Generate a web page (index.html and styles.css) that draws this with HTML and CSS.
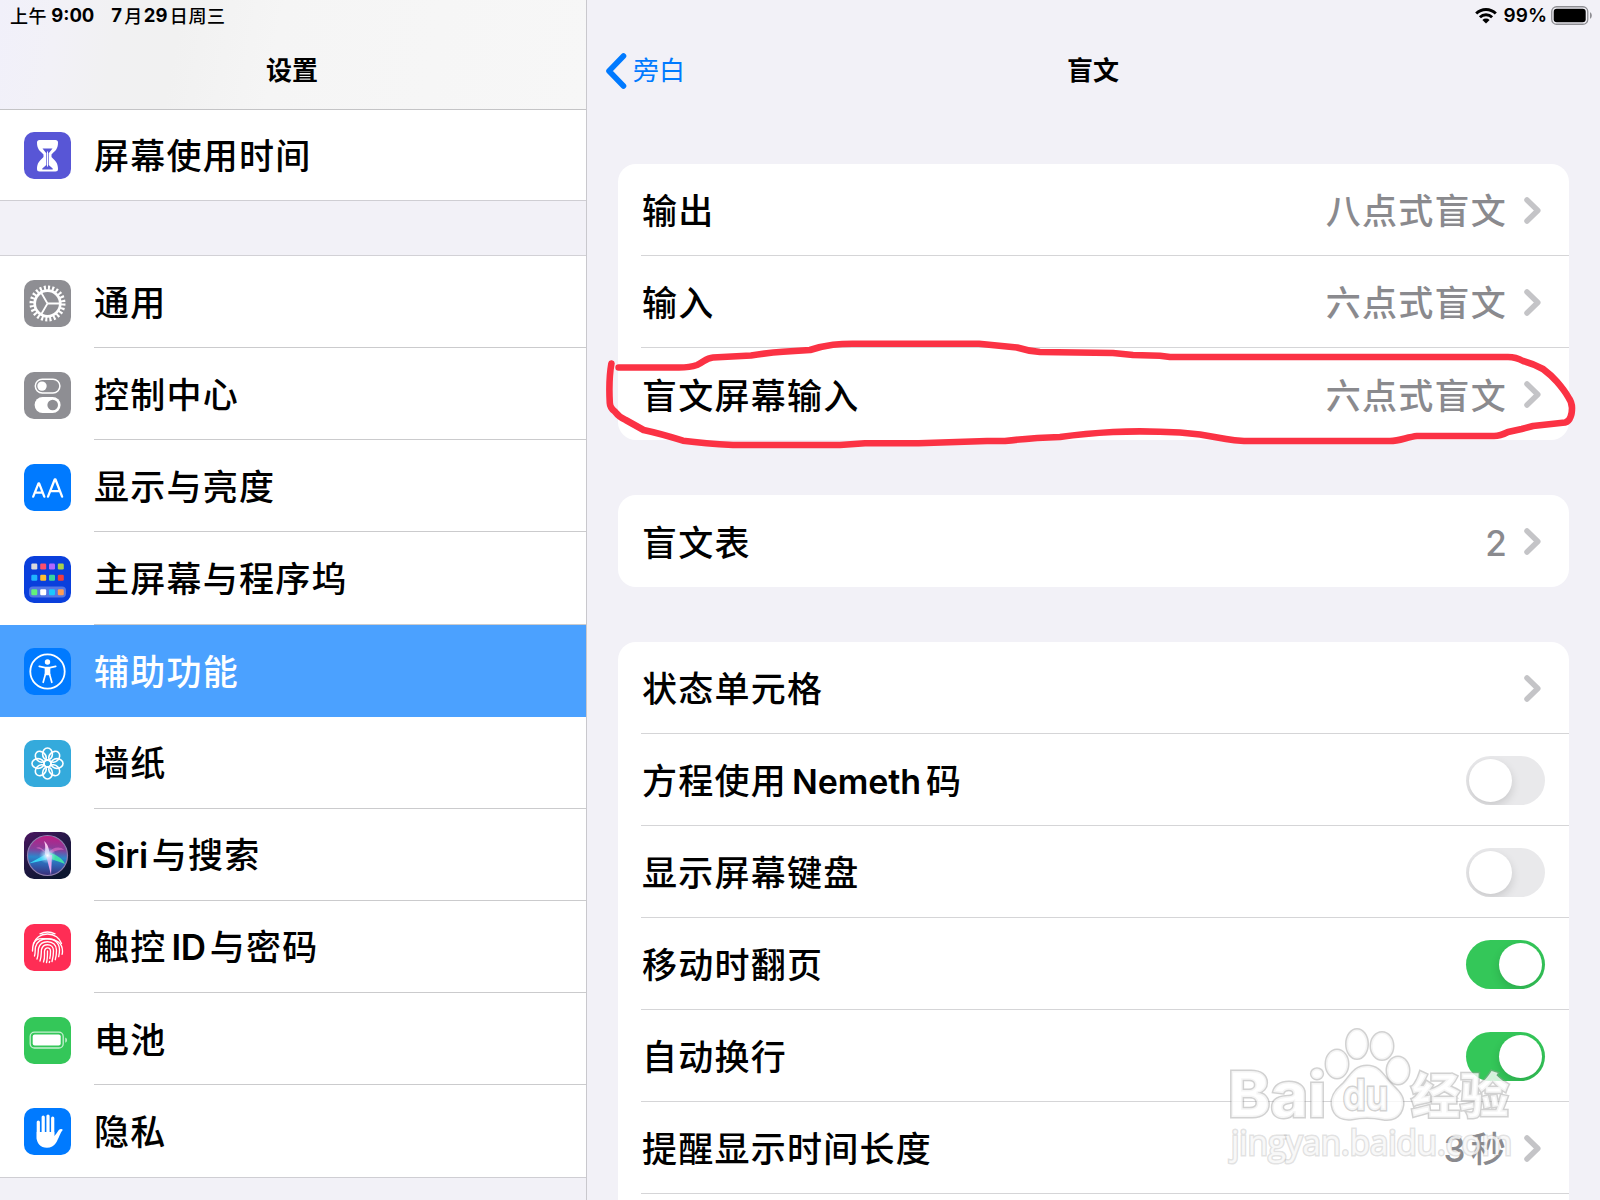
FILE: index.html
```html
<!DOCTYPE html>
<html lang="zh-CN">
<head>
<meta charset="utf-8">
<title>设置</title>
<link rel="stylesheet" href="styles.css">
</head>
<body>
<div class="app">
  <aside class="sidebar">
    <header class="side-header">
      <div class="status status-left"><span class="cjk">上午</span><span class="time">9:00</span><span class="day">7</span><span class="cjk">月</span><span class="num">29</span><span class="cjk">日周三</span></div>
      <h1 class="title">设置</h1>
    </header>
    <ul class="menu menu-top">
      <li class="item">
        <svg class="icon" viewBox="0 0 47 47"><rect width="47" height="47" rx="10" fill="#5856d6"/><path d="M15.500 8h16q2.500 0 2.500 2.500c0 6.500-2.500 8-6.500 12v2.500c4 4 6.500 6 6.500 12q0 2.500-2.500 2.500h-16q-2.500 0-2.500-2.500c0-6 2.500-8 6.500-12v-2.500c-4-4-6.500-5.500-6.500-12Q13 8 15.500 8z" fill="#fff"/><path d="M18.500 16.500h10l-4 5h-2zM22.300 21.500h2.400V33l4 3.500v1H18.300v-1l4-3.500z" fill="#5856d6"/><path d="M23.500 19.500V34.500" stroke="#fff" stroke-width="1"/></svg>
        <span class="label">屏幕使用时间</span>
      </li>
    </ul>
    <ul class="menu">
      <li class="item">
        <svg class="icon" viewBox="0 0 47 47"><rect width="47" height="47" rx="10" fill="#8e8e93"/><g fill="none" stroke="#fff"><circle cx="23.500" cy="23.500" r="15.600" stroke-width="4.800" stroke-dasharray="2.042 2.042"/><circle cx="23.500" cy="23.500" r="12.800" stroke-width="2.700"/><path d="M23.500 23.500H36M23.500 23.500l-6.400-11M23.500 23.500l-6.400 11" stroke-width="1.800"/></g></svg>
        <span class="label">通用</span>
      </li>
      <li class="item">
        <svg class="icon" viewBox="0 0 47 47"><rect width="47" height="47" rx="10" fill="#8e8e93"/><rect x="11.300" y="7.200" width="24.600" height="13.800" rx="6.900" fill="none" stroke="#fff" stroke-width="1.500"/><circle cx="18" cy="14.100" r="4.700" fill="#fff"/><rect x="10.600" y="25" width="26" height="16" rx="8" fill="#fff"/><circle cx="28.700" cy="33" r="5.300" fill="#8e8e93"/></svg>
        <span class="label">控制中心</span>
      </li>
      <li class="item">
        <svg class="icon" viewBox="0 0 47 47"><rect width="47" height="47" rx="10" fill="#007aff"/><path d="M9.200 32.600l5.300-13.200h.6L20.300 32.600M11 28.600h7.300M24 32.600l6.700-17.100h.8L38.100 32.600M26.400 27.200h9.200" fill="none" stroke="#fff" stroke-width="2.300" stroke-linecap="round" stroke-linejoin="round"/></svg>
        <span class="label">显示与亮度</span>
      </li>
      <li class="item">
        <svg class="icon" viewBox="0 0 47 47"><rect width="47" height="47" rx="10" fill="#0a3fdc"/><rect x="5" y="30.600" width="37" height="11" rx="4" fill="#5377e4"/><g><rect x="7.300" y="7.500" width="6" height="6" rx="1.200" fill="#d8d8dc"/><rect x="16.200" y="7.500" width="6" height="6" rx="1.200" fill="#fc4f6d"/><rect x="25" y="7.500" width="6" height="6" rx="1.200" fill="#b067ff"/><rect x="33.800" y="7.500" width="6" height="6" rx="1.200" fill="#a9d04b"/><rect x="7.300" y="18.800" width="6" height="6" rx="1.200" fill="#1fb4ff"/><rect x="16.200" y="18.800" width="6" height="6" rx="1.200" fill="#fdc02f"/><rect x="25" y="18.800" width="6" height="6" rx="1.200" fill="#36d5a0"/><rect x="33.800" y="18.800" width="6" height="6" rx="1.200" fill="#f23c3c"/><rect x="7.300" y="33.200" width="6" height="6" rx="1.200" fill="#62f27c"/><rect x="16.200" y="33.200" width="6" height="6" rx="1.200" fill="#fff"/><rect x="25" y="33.200" width="6" height="6" rx="1.200" fill="#19c8ff"/><rect x="33.800" y="33.200" width="6" height="6" rx="1.200" fill="#ff9c52"/></g></svg>
        <span class="label">主屏幕与程序坞</span>
      </li>
      <li class="item selected">
        <svg class="icon" viewBox="0 0 47 47"><rect width="47" height="47" rx="10" fill="#007aff"/><circle cx="23.500" cy="23.500" r="17.200" fill="none" stroke="#fff" stroke-width="1.800"/><circle cx="23.500" cy="14" r="2.700" fill="#fff"/><path d="M15.300 18.300l5.700 1.300h5l5.700-1.300" fill="none" stroke="#fff" stroke-width="1.800" stroke-linecap="round"/><path d="M20.700 19.200h5.600v7l-.5 1h-4.600l-.5-1z" fill="#fff"/><path d="M21.500 26l-2.300 8.300M25.500 26l2.300 8.300" stroke="#fff" stroke-width="1.700" stroke-linecap="round"/></svg>
        <span class="label">辅助功能</span>
      </li>
      <li class="item">
        <svg class="icon" viewBox="0 0 47 47"><rect width="47" height="47" rx="10" fill="#34aadc"/><g fill="none" stroke="#fff" stroke-width="1.600"><g id="petals"><ellipse cx="23.500" cy="14" rx="4.900" ry="6"/><ellipse cx="23.500" cy="33" rx="4.900" ry="6"/><ellipse cx="14" cy="23.500" rx="6" ry="4.900"/><ellipse cx="33" cy="23.500" rx="6" ry="4.900"/></g><use href="#petals" transform="rotate(45 23.500 23.500)"/><circle cx="23.500" cy="23.500" r="3.400"/></g></svg>
        <span class="label">墙纸</span>
      </li>
      <li class="item">
        <svg class="icon" viewBox="0 0 47 47">
          <defs>
            <linearGradient id="siri-bg" x1="0" y1="0" x2=".6" y2="1"><stop offset="0" stop-color="#4b1560"/><stop offset=".5" stop-color="#241846"/><stop offset="1" stop-color="#0c1630"/></linearGradient>
            <linearGradient id="siri-orb" x1=".5" y1="0" x2=".45" y2="1"><stop offset="0" stop-color="#c01c84"/><stop offset=".35" stop-color="#84409c"/><stop offset=".55" stop-color="#2c88cc"/><stop offset=".75" stop-color="#2f5fb0"/><stop offset="1" stop-color="#3a2d78"/></linearGradient>
            <radialGradient id="siri-glow"><stop offset="0" stop-color="#fff"/><stop offset=".3" stop-color="#cfe9ff" stop-opacity=".8"/><stop offset="1" stop-color="#8ad8ff" stop-opacity="0"/></radialGradient>
          </defs>
          <rect width="47" height="47" rx="10" fill="url(#siri-bg)"/><circle cx="23.500" cy="23.500" r="20" fill="url(#siri-orb)" stroke="#8e7fae" stroke-width="1.200"/>
          <path d="M23 22C17 14 14 15 12 16c6 1 8 4 11 6zM24 21c5-6 12-7 16-3-6-1-10 1-16 6z" fill="#e26cc4" opacity=".65"/><path d="M24 21L5 31.500l18-4z" fill="#39d5f5"/><path d="M24 20c6 2 14 5 17 12-7-3-13-4-18-7z" fill="#3fe0a8"/><path d="M22 23l5 20 1-20z" fill="#e8a5ee"/><path d="M20 9c2 5 1 9 1 14l5 2c-1-7-1-12-6-16z" fill="#f6c4ee"/>
          <circle cx="23.500" cy="23.500" r="8.500" fill="url(#siri-glow)"/>
        </svg>
        <span class="label"><span class="latin">Siri</span>与搜索</span>
      </li>
      <li class="item">
        <svg class="icon" viewBox="0 0 47 47"><rect width="47" height="47" rx="10" fill="#ff2d55"/><g fill="none" stroke="#fff" stroke-width="1.350" stroke-linecap="round"><path d="M16 9.800c4.500-2.200 10.500-2.200 15 0"/><path d="M9.500 19.500c1-3 2.500-5 5-6.800 5-3.600 13-3.600 18 0 2.500 1.800 4 4 5 6.800"/><path d="M8.500 27c0-15 9-12.200 15-12.200 9 0 15 4.500 15 12.500 0 1 0 2-.4 3"/><path d="M10.500 32c1-3 .5-6 1-9 1.500-5.500 6-8.300 12-8.300 7 0 12 4.500 12 11 0 3-.3 5-.8 7"/><path d="M13 35c1.500-4 1-7.500 1.500-10.500 1-4.300 4.500-6.800 9-6.800 5.500 0 9 3.500 9 8.500 0 4-.4 6.500-1.200 9.500"/><path d="M16 37c1.800-4.500 1-8.500 1.500-11.500.7-3 3-4.800 6-4.800 3.700 0 6 2.500 6 6 0 4-.5 7-1.500 10.800"/><path d="M19.500 38c1.700-4 .8-8 1-11 .3-2 1.400-3.200 3-3.200 2 0 3 1.200 3 3.400 0 3.500-.2 5.300-.7 7.300"/><path d="M23.500 27c0 4.500 0 8-1 11.500M25.600 37.500l-.3 1"/></g></svg>
        <span class="label">触控<span class="latin latin-mid">ID</span>与密码</span>
      </li>
      <li class="item">
        <svg class="icon" viewBox="0 0 47 47"><rect width="47" height="47" rx="10" fill="#34c759"/><rect x="6.200" y="15.200" width="33" height="15.800" rx="4.300" fill="none" stroke="#c5f0d0" stroke-width="1.300"/><rect x="8.700" y="17.600" width="28" height="11" rx="2" fill="#fff"/><path d="M41.200 20.500c2.500.8 2.500 4.400 0 5.200z" fill="#b9edc6"/></svg>
        <span class="label">电池</span>
      </li>
      <li class="item">
        <svg class="icon" viewBox="0 0 47 47"><rect width="47" height="47" rx="10" fill="#007aff"/><path d="M14.300 14v17M19.200 9v17M24 8v17M28.700 10v17" stroke="#fff" stroke-width="3.200" stroke-linecap="round"/><path d="M12.700 24h17.600v4c1.500-1 3.200-4.500 4.500-6 1.200-1.300 3.500-1.300 4-.1-2.300 2.100-4.200 9.100-6.900 13-2 3-5 4.800-9 4.800-6.500 0-10.200-4.200-10.200-10.200z" fill="#fff"/></svg>
        <span class="label">隐私</span>
      </li>
    </ul>
  </aside>

  <main class="detail">
    <div class="status status-right">
      <svg class="wifi" viewBox="0 0 22 16"><g fill="none" stroke="#000" stroke-width="2.900"><path d="M1.200 5.600a13.800 13.800 0 0 1 19.600 0"/><path d="M4.900 9.300a8.700 8.700 0 0 1 12.200 0"/></g><path d="M11 15.500l-3.600-3.600a5.100 5.100 0 0 1 7.200 0z"/></svg>
      <span class="percent">99%</span>
      <svg class="battery" viewBox="0 0 42 19"><rect x=".75" y=".75" width="36" height="17.500" rx="4.800" fill="none" stroke="#8e8e93" stroke-width="1.300"/><rect x="2.700" y="2.700" width="32" height="13.600" rx="3" fill="#000"/><path d="M39 6.300c2.400.9 2.400 5.500 0 6.400z" fill="#8e8e93"/></svg>
    </div>
    <header class="nav">
      <a class="back"><svg class="back-arrow" viewBox="0 0 22 36"><path d="M18.500 3L4 18l14.500 15" fill="none" stroke="#007aff" stroke-width="5.600" stroke-linecap="round" stroke-linejoin="round"/></svg><span>旁白</span></a>
      <h1 class="title">盲文</h1>
    </header>

    <section class="card">
      <div class="row"><span class="label">输出</span><span class="value">八点式盲文</span><svg class="chevron" viewBox="0 0 17 27"><path d="M3 3l10.800 10.500L3 24"/></svg></div>
      <div class="row"><span class="label">输入</span><span class="value">六点式盲文</span><svg class="chevron" viewBox="0 0 17 27"><path d="M3 3l10.800 10.500L3 24"/></svg></div>
      <div class="row"><span class="label">盲文屏幕输入</span><span class="value">六点式盲文</span><svg class="chevron" viewBox="0 0 17 27"><path d="M3 3l10.800 10.500L3 24"/></svg></div>
    </section>

    <section class="card">
      <div class="row"><span class="label">盲文表</span><span class="value value-num">2</span><svg class="chevron" viewBox="0 0 17 27"><path d="M3 3l10.800 10.500L3 24"/></svg></div>
    </section>

    <section class="card">
      <div class="row"><span class="label">状态单元格</span><svg class="chevron" viewBox="0 0 17 27"><path d="M3 3l10.800 10.500L3 24"/></svg></div>
      <div class="row"><span class="label">方程使用<span class="latin nemeth">Nemeth</span>码</span><span class="toggle"></span></div>
      <div class="row"><span class="label">显示屏幕键盘</span><span class="toggle"></span></div>
      <div class="row"><span class="label">移动时翻页</span><span class="toggle on"></span></div>
      <div class="row"><span class="label">自动换行</span><span class="toggle on"></span></div>
      <div class="row"><span class="label">提醒显示时间长度</span><span class="value"><span class="secs">3</span>秒</span><svg class="chevron" viewBox="0 0 17 27"><path d="M3 3l10.800 10.500L3 24"/></svg></div>
      <div class="row"></div>
    </section>
  </main>

  <svg class="overlay" viewBox="0 0 1600 1200">
    <path class="marker" d="M618.600 367.500H679Q690 367.500 697 365C704 362 706 358 713 357.500L751 355.500Q770 352.500 783 351.700L810 350Q822 346 833 344.700Q842 343.800 852.500 343.800H979L1017 347.500Q1028 351 1040 352L1113 353L1133 355L1160 355.700L1170 357H1508Q1516 357 1523 361Q1534 364 1543 369Q1551 375 1557 381.700Q1565 391 1568 396.700Q1572 402 1572 408Q1572 414 1570.500 417Q1569 421.500 1565 422.500L1533 426L1521.700 429L1508 432Q1500 436 1494 436H1417C1407 437 1400 441 1390 441H1244Q1234 440.500 1226 439L1200 434.500Q1180 432 1160 431.700Q1135 431 1113 432Q1085 433.500 1060 437Q1030 438 1005 441H987L918.600 443.300H865L840 445H733Q705 443.500 683 440.700Q662 434 643.600 430L625.700 420Q619 417 615 411.700Q610 408 609.800 403Q608.500 380 611.400 363.500"/>
    <g class="watermark">
      <text class="wm-logo" x="1228" y="1117" textLength="98" lengthAdjust="spacingAndGlyphs">Bai</text>
      <ellipse cx="1337" cy="1064" rx="11" ry="14"/>
      <ellipse cx="1357" cy="1044" rx="10.500" ry="14.500"/>
      <ellipse cx="1382" cy="1046" rx="11" ry="13.500"/>
      <ellipse cx="1398" cy="1070.500" rx="11" ry="13.500"/>
      <path d="M1367 1066c-14 0-17 12-25 19-7 6-11 12-10 20 2 13 12 15 20 14 10-2 20-2 30 0 9 2 19-1 21-14 1-9-5-14-11-20-9-9-12-19-25-19z"/>
      <text class="wm-du" x="1343" y="1110" textLength="45" lengthAdjust="spacingAndGlyphs">du</text>
      <text class="wm-cjk" x="1411" y="1113" textLength="98" lengthAdjust="spacingAndGlyphs">经验</text>
      <text class="wm-url" x="1231" y="1155" textLength="281" lengthAdjust="spacingAndGlyphs">jingyan.baidu.com</text>
    </g>
  </svg>
</div>
</body>
</html>
```

FILE: styles.css
```css
* {
  box-sizing: border-box;
}

body {
  margin: 0;
  background: #f2f1f7;
  color: #000;
  font-family: Inter, "Noto Sans CJK SC", sans-serif;
}

.app {
  position: relative;
  display: flex;
  width: 1600px;
  height: 1200px;
  overflow: hidden;
}

.sidebar {
  width: 587px;
  height: 1200px;
  flex: none;
  border-right: 1px solid #c9c8cd;
  overflow: hidden;
}

.side-header {
  height: 110px;
  border-bottom: 1px solid #c4c4c6;
  background: linear-gradient(100deg, #f1f0fa 0, #f2f1f7 60px, #f1f1f2 120px, #f1f1f1 180px, #f5f5f5 280px, #f7f7f7 100%);
}

.status {
  display: flex;
  align-items: center;
  height: 31px;
  font-size: 18.500px;
  font-weight: 600;
}

.status-left {
  height: 30px;
  padding-left: 10px;
  white-space: nowrap;
}

.status .cjk {
  font-size: 18px;
  font-weight: 500;
  letter-spacing: 0.600px;
}

.status-left > span:not(.cjk) {
  font-weight: 700;
}

.time {
  width: 43px;
  margin: 0 17px 0 4px;
}

.day {
  width: 13px;
}

.num {
  width: 26px;
  margin-left: 1px;
}

.title {
  margin: 0;
  font-size: 26px;
  font-weight: 600;
  line-height: 38px;
  text-align: center;
}

.side-header .title {
  margin: 22px 2px 0 0;
}

.menu {
  margin: 0 0 54px;
  padding: 0;
  list-style: none;
  background: #fff;
  border-top: 1px solid #d2d1d6;
  border-bottom: 1px solid #cfced3;
}

.menu-top {
  border-top: 0;
}

.item {
  display: flex;
  align-items: center;
  height: 92.130px;
  padding: 2px 0 0 23.500px;
  gap: 23.500px;
}

.item:last-child {
  height: 91.630px;
}

.menu-top .item:last-child {
  height: 90px;
  padding-top: 1px;
}

.icon {
  width: 47px;
  height: 47px;
  flex: none;
}

.label {
  flex: 1;
  font-size: 35px;
  font-weight: 500;
  line-height: 50px;
  letter-spacing: 1.250px;
  white-space: nowrap;
}

.item .label {
  display: flex;
  align-items: center;
  align-self: stretch;
  border-bottom: 1px solid #cbcbcd;
}

.menu-top .label,
.item:last-child .label,
.selected .label {
  border-bottom: 0;
}

.selected {
  background: #4ba1ff;
  color: #fff;
}

.latin {
  letter-spacing: -0.400px;
  margin-right: 4px;
}

.latin-mid {
  margin-left: 5px;
}

.detail {
  flex: 1;
  padding: 0 31px 0 31px;
}

.status-right {
  justify-content: flex-end;
  margin-right: -24px;
}

.wifi {
  width: 22px;
  height: 16px;
}

.percent {
  margin: 0 4px 0 7px;
  font-size: 19px;
}

.battery {
  width: 42px;
  height: 19px;
}

.nav {
  display: grid;
  grid-template-columns: 1fr auto 1fr;
  align-items: center;
  height: 80px;
  margin-bottom: 53.300px;
}

.nav .title {
  margin-right: 1px;
}

.back {
  display: flex;
  align-items: center;
  gap: 6px;
  margin-left: -13px;
  color: #007aff;
  font-size: 26px;
  line-height: 38px;
}

.back-arrow {
  width: 22px;
  height: 36px;
}

.card {
  margin-bottom: 54.800px;
  border-radius: 18px;
  background: #fff;
}

.row {
  display: flex;
  align-items: center;
  height: 92.050px;
  margin-left: 23px;
  padding: 1px 24px 0 1px;
  border-bottom: 1px solid #d5d5d7;
}

.row:last-child {
  border-bottom: 0;
}

.row .label,
.row .value {
  padding-top: 2px;
}

.value {
  color: #8a8a8e;
  font-size: 35px;
  font-weight: 500;
  line-height: 50px;
  letter-spacing: 1.250px;
}

.value-num {
  margin-right: -1px;
}

.secs {
  margin-right: 4px;
}

.chevron {
  width: 17px;
  height: 27px;
  margin: 0 4px 0 17px;
  fill: none;
  stroke: #c4c4c7;
  stroke-width: 5.500;
  stroke-linecap: round;
  stroke-linejoin: round;
}

.nemeth {
  letter-spacing: -0.100px;
  margin: 0 5px 0 5px;
  font-size: 34px;
  font-weight: 600;
}

.item .latin {
  font-weight: 600;
}

.toggle {
  display: flex;
  width: 79.500px;
  height: 49px;
  padding: 3px;
  border-radius: 25px;
  background: #e9e9eb;
  overflow: hidden;
}

.toggle::before {
  content: "";
  width: 43px;
  height: 43px;
  border-radius: 50%;
  background: #fff;
  box-shadow: 0 4px 10px rgba(0, 0, 0, 0.140);
}

.toggle.on {
  justify-content: flex-end;
  background: #34c759;
}

.overlay {
  position: absolute;
  inset: 0;
  width: 1600px;
  height: 1200px;
  pointer-events: none;
}

.marker {
  fill: none;
  stroke: #fb3244;
  stroke-width: 6.600;
  stroke-linecap: round;
  stroke-linejoin: round;
}

.watermark {
  fill: #fff;
  fill-opacity: 0.780;
  stroke: #999;
  stroke-opacity: 0.450;
  stroke-width: 3;
  paint-order: stroke;
}

.wm-logo {
  font: 800 63px Inter, sans-serif;
}

.wm-du {
  font: 700 42px Inter, sans-serif;
}

.wm-cjk {
  font: 900 48px "Noto Sans CJK SC", sans-serif;
}

.wm-url {
  font: 400 34px "Open Sans", sans-serif;
  stroke-opacity: 0.300;
}
```
